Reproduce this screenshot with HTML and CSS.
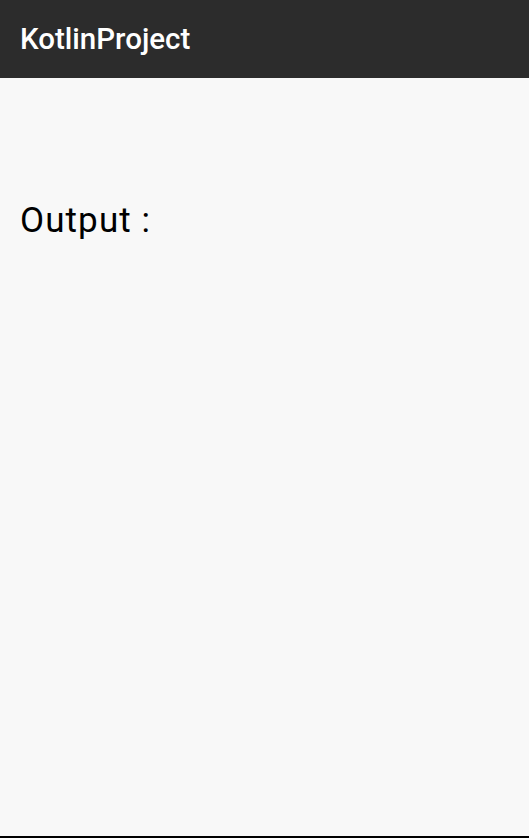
FILE: index.html
```html
<!DOCTYPE html>
<html>
<head>
<meta charset="utf-8">
<link rel="stylesheet" href="styles.css">
</head>
<body>
<div class="screen">
  <header class="appbar"><h1 class="title">KotlinProject</h1></header>
  <main class="content">
    <p class="output">Output :</p>
  </main>
  <div class="bottom-line"></div>
</div>
</body>
</html>
```

FILE: styles.css
```css
html, body {
  margin: 0;
  padding: 0;
  height: 100%;
}
body {
  font-family: Roboto, "Noto Sans", sans-serif;
  background: #f8f8f8;
}
.screen {
  display: flex;
  flex-direction: column;
  height: 838px;
}
.appbar {
  height: 78px;
  background: #2c2c2c;
  display: flex;
  align-items: center;
  padding: 0 20px;
  flex-shrink: 0;
}
.title {
  margin: 0;
  color: #ffffff;
  font-size: 29.5px;
  line-height: 34px;
  font-weight: 500;
}
.content {
  flex: 1;
  padding: 0 20px;
}
.output {
  margin: 123px 0 0 0;
  font-size: 35px;
  line-height: 40px;
  letter-spacing: 1.1px;
  color: #000;
}
.bottom-line {
  height: 2px;
  background: #000;
  flex-shrink: 0;
}
```
